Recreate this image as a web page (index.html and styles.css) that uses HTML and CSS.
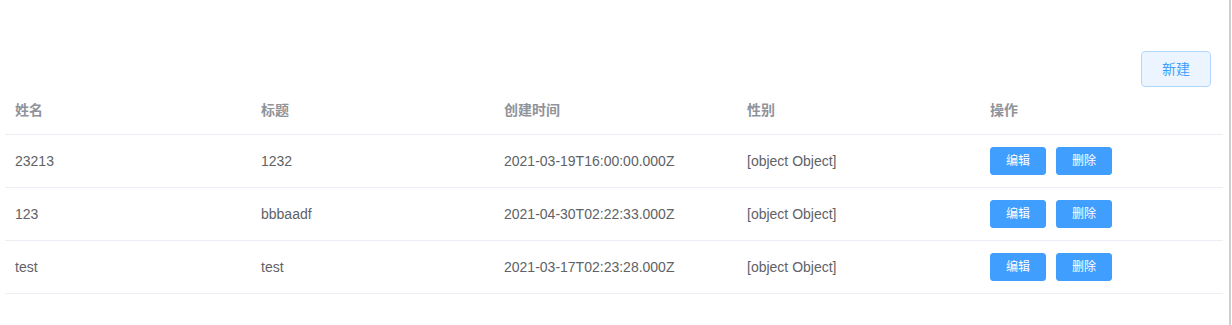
FILE: index.html
```html
<!DOCTYPE html>
<html lang="zh-CN">
<head>
<meta charset="utf-8">
<title>列表</title>
<link rel="stylesheet" href="styles.css">
</head>
<body>
<div class="page">
  <div class="content">
    <div class="toolbar">
      <button class="btn btn-plain">新建</button>
    </div>
    <table class="table">
      <colgroup>
        <col class="c1"><col class="c2"><col class="c3"><col class="c4"><col class="c5">
      </colgroup>
      <thead>
        <tr><th>姓名</th><th>标题</th><th>创建时间</th><th>性别</th><th>操作</th></tr>
      </thead>
      <tbody>
        <tr>
          <td>23213</td><td>1232</td><td>2021-03-19T16:00:00.000Z</td><td>[object Object]</td>
          <td><div class="ops"><button class="btn btn-mini">编辑</button><button class="btn btn-mini">删除</button></div></td>
        </tr>
        <tr>
          <td>123</td><td>bbbaadf</td><td>2021-04-30T02:22:33.000Z</td><td>[object Object]</td>
          <td><div class="ops"><button class="btn btn-mini">编辑</button><button class="btn btn-mini">删除</button></div></td>
        </tr>
        <tr>
          <td>test</td><td>test</td><td>2021-03-17T02:23:28.000Z</td><td>[object Object]</td>
          <td><div class="ops"><button class="btn btn-mini">编辑</button><button class="btn btn-mini">删除</button></div></td>
        </tr>
      </tbody>
    </table>
  </div>
</div>
</body>
</html>
```

FILE: styles.css
```css
html, body {
  margin: 0;
  padding: 0;
  background: #fff;
}
body {
  font-family: "Liberation Sans", "Noto Sans CJK SC", Arial, sans-serif;
  font-size: 14px;
  color: #606266;
}
.page {
  width: 1229px;
  height: 325px;
  border-right: 2px solid #cfcfcf;
  box-sizing: border-box;
  width: 1231px;
}
.content {
  padding: 51px 0 0 5px;
  width: 1218px;
}
.toolbar {
  display: flex;
  justify-content: flex-end;
  padding-right: 12px;
}
.btn {
  font-family: inherit;
  cursor: pointer;
  box-sizing: border-box;
  margin: 0;
  line-height: 1;
}
.btn-plain {
  height: 36px;
  padding: 10px 20px;
  font-size: 14px;
  color: #409eff;
  background: #ecf5ff;
  border: 1px solid #b3d8ff;
  border-radius: 4px;
}
.table {
  width: 1218px;
  border-collapse: collapse;
  table-layout: fixed;
}
.c1 { width: 246px; }
.c2, .c3, .c4, .c5 { width: 243px; }
.table th, .table td {
  padding: 12px 10px;
  text-align: left;
  border-bottom: 1px solid #ebeef5;
  line-height: 23px;
  vertical-align: middle;
}
.table th {
  color: #909399;
  font-weight: bold;
  height: 23px;
}
.table td {
  height: 28px;
}
.ops {
  display: flex;
  gap: 10px;
}
.btn-mini {
  height: 28px;
  padding: 7px 15px;
  font-size: 12px;
  color: #fff;
  background: #409eff;
  border: 1px solid #409eff;
  border-radius: 3px;
}
```
